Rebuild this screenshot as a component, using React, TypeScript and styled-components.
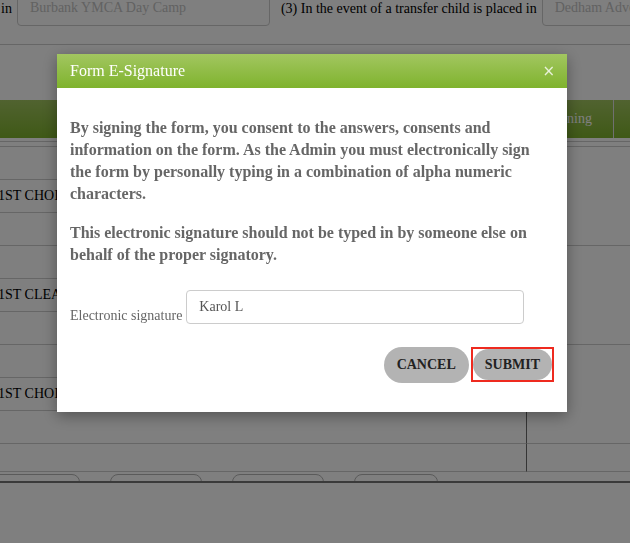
import React from 'react';
import styled, { createGlobalStyle } from 'styled-components';

const SERIF = '"Liberation Serif", "Times New Roman", serif';
const GREEN_TOP = '#a2c660';
const GREEN_BOTTOM = '#7fb32d';
const LINE = '#cccccc';

const GlobalStyle = createGlobalStyle`
  html, body {
    margin: 0;
    padding: 0;
    background: #ffffff;
    overflow: hidden;
  }
  body {
    font-family: ${SERIF};
    font-size: 14px;
    color: #000;
  }
`;

const groups = ['1ST CHOICE SESSION', '1ST CLEARANCE', '1ST CHOICE SESSION'];
const tabs = [90, 90, 90, 82];

const App = () => {
  return (
    <>
      <GlobalStyle />
      <Page>
        <TopRow>
          <Label>in</Label>
          <TopInput $width={253} placeholder="Burbank YMCA Day Camp" readOnly />
          <Label $gap={11}>(3) In the event of a transfer child is placed in</Label>
          <TopInput $width={220} placeholder="Dedham Adventure Camp" readOnly />
        </TopRow>
        <Spacer />
        <HeadBar>
          <HeadCell $width={526} />
          <HeadCell $width={87}>Screening</HeadCell>
          <HeadCell $divider />
        </HeadBar>
        <HeadRule />
        {groups.map((text, i) => (
          <Group key={i}>
            <SubRows>
              <SubRow />
              <SubRow>{text}</SubRow>
              <SubRow />
            </SubRows>
            <SideCell />
          </Group>
        ))}
        <Group>
          <LastRow />
          <SideCell />
        </Group>
        <TabStrip>
          {tabs.map((w, i) => (
            <Tab key={i} $width={w} />
          ))}
        </TabStrip>
      </Page>

      <Backdrop>
        <Modal>
          <ModalHeader>
            <Title>Form E-Signature</Title>
            <Close>×</Close>
          </ModalHeader>
          <ModalBody>
            <Para>
              By signing the form, you consent to the answers, consents and information on the
              form. As the Admin you must electronically sign the form by personally typing in a
              combination of alpha numeric characters.
            </Para>
            <Para $gap={17}>
              This electronic signature should not be typed in by someone else on behalf of the
              proper signatory.
            </Para>
            <FieldRow>
              <FieldLabel>Electronic signature</FieldLabel>
              <SignatureInput defaultValue="Karol L" autoFocus />
            </FieldRow>
            <Actions>
              <PillButton $height={36} $padding={13}>CANCEL</PillButton>
              <Highlight>
                <PillButton $height={31} $padding={12}>SUBMIT</PillButton>
              </Highlight>
            </Actions>
          </ModalBody>
        </Modal>
      </Backdrop>
    </>
  );
};

export default App;

const Page = styled.div`
  width: 630px;
  overflow: hidden;
`;

const TopRow = styled.div`
  display: flex;
  align-items: flex-start;
  height: 44px;
  border-bottom: 1px solid ${LINE};
  white-space: nowrap;
`;

const Label = styled.span<{ $gap?: number }>`
  flex: none;
  margin-left: ${(p) => p.$gap ?? 1}px;
  font-size: 14px;
  line-height: 18px;
`;

const TopInput = styled.input<{ $width: number }>`
  flex: none;
  box-sizing: border-box;
  width: ${(p) => p.$width}px;
  height: 36px;
  margin: -10px 0 0 5px;
  padding: 0 12px;
  border: 1px solid ${LINE};
  border-radius: 4px;
  background: #fff;
  font-family: ${SERIF};
  font-size: 14px;
  outline: none;

  &::placeholder {
    color: #c4c4c4;
  }
`;

const Spacer = styled.div`
  height: 55px;
`;

const HeadBar = styled.div`
  display: flex;
  height: 38px;
  background: linear-gradient(${GREEN_TOP}, ${GREEN_BOTTOM});
  color: #fff;
`;

const HeadCell = styled.div<{ $width?: number; $divider?: boolean }>`
  flex: ${(p) => (p.$width ? 'none' : '1')};
  width: ${(p) => (p.$width ? `${p.$width}px` : 'auto')};
  display: flex;
  align-items: center;
  padding-left: 10px;
  box-sizing: border-box;
  font-size: 14px;
  white-space: nowrap;
  border-left: ${(p) => (p.$divider ? '1px solid #e0e0e0' : 'none')};
`;

const HeadRule = styled.div`
  height: 4px;
  margin-top: 3px;
  border-top: 1px solid ${LINE};
  border-bottom: 1px solid ${LINE};
`;

const Group = styled.div`
  display: grid;
  grid-template-columns: 526px 1fr;
`;

const SubRows = styled.div`
  display: flex;
  flex-direction: column;
`;

const SubRow = styled.div`
  height: 32px;
  border-bottom: 1px solid ${LINE};
  display: flex;
  align-items: center;
  margin-left: -2px;
  font-size: 14px;
  white-space: nowrap;
`;

const LastRow = styled.div`
  height: 27px;
  border-bottom: 1px solid ${LINE};
`;

const SideCell = styled.div`
  border-left: 1px solid #6a6a6a;
  border-bottom: 1px solid ${LINE};
`;

const TabStrip = styled.div`
  display: flex;
  gap: 30px;
  height: 9px;
  margin-left: -12px;
  overflow: hidden;
  border-bottom: 2px solid #747474;
`;

const Tab = styled.div<{ $width: number }>`
  flex: none;
  width: ${(p) => p.$width}px;
  height: 30px;
  margin-top: 2px;
  border: 1px solid #b4b4b4;
  border-radius: 8px;
`;

const Backdrop = styled.div`
  position: fixed;
  inset: 0;
  background: rgba(0, 0, 0, 0.5);
  display: flex;
  align-items: flex-start;
  padding: 54px 0 0 57px;
`;

const Modal = styled.div`
  width: 510px;
  background: #fff;
  box-shadow: 0 4px 14px rgba(0, 0, 0, 0.35);
`;

const ModalHeader = styled.div`
  height: 34px;
  display: flex;
  align-items: center;
  justify-content: space-between;
  padding: 0 12px 0 13px;
  background: linear-gradient(${GREEN_TOP}, ${GREEN_BOTTOM});
`;

const Title = styled.span`
  color: #fff;
  font-size: 16px;
`;

const Close = styled.span`
  color: rgba(255, 255, 255, 0.8);
  font-family: "DejaVu Sans", sans-serif;
  font-size: 15px;
  line-height: 1;
`;

const ModalBody = styled.div`
  padding: 29px 13px 29px;
`;

const Para = styled.p<{ $gap?: number }>`
  margin: ${(p) => p.$gap ?? 0}px 0 0;
  color: #666;
  font-size: 16px;
  font-weight: bold;
  line-height: 22px;
`;

const FieldRow = styled.div`
  display: flex;
  align-items: flex-end;
  gap: 4px;
  margin-top: 24px;
`;

const FieldLabel = styled.span`
  color: #666;
  font-size: 14px;
  line-height: 16px;
`;

const SignatureInput = styled.input`
  box-sizing: border-box;
  width: 338px;
  height: 34px;
  padding: 0 12px;
  border: 1px solid ${LINE};
  border-radius: 4px;
  font-family: ${SERIF};
  font-size: 14px;
  color: #555;
  caret-color: #333;
  outline: none;
`;

const Actions = styled.div`
  display: flex;
  justify-content: flex-end;
  align-items: flex-start;
  gap: 2px;
  margin-top: 23px;
`;

const Highlight = styled.div`
  border: 2px solid #ee2a1f;
  background: #fff;
  display: flex;
`;

const PillButton = styled.button<{ $height: number; $padding: number }>`
  height: ${(p) => p.$height}px;
  padding: 0 ${(p) => p.$padding}px;
  border: none;
  border-radius: 18px;
  background: #b3b3b3;
  color: #222;
  font-family: ${SERIF};
  font-size: 14px;
  font-weight: bold;
  cursor: pointer;
`;
